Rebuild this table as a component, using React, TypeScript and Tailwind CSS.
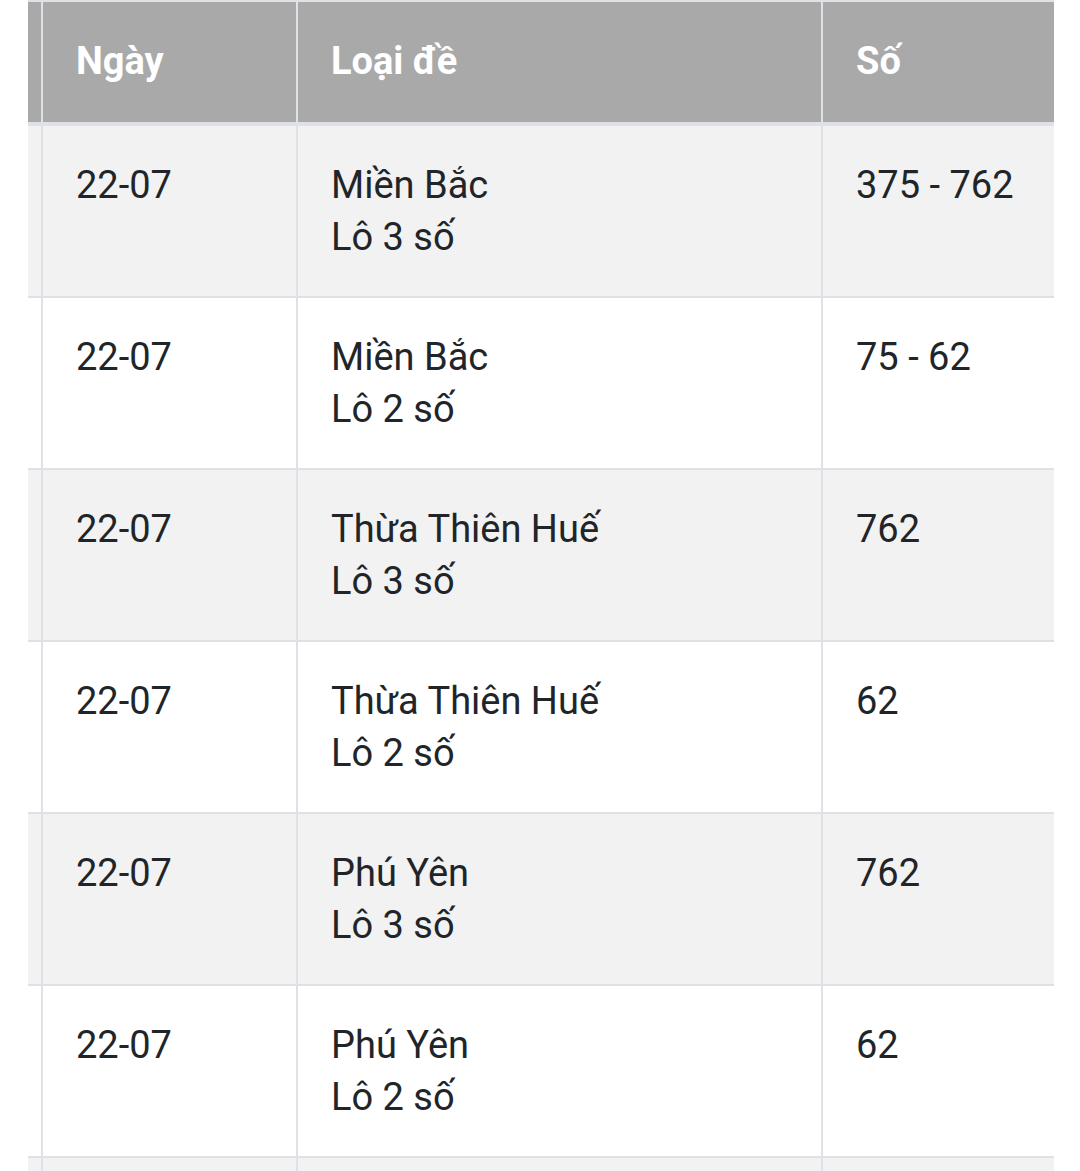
const rows = [
  { date: "22-07", region: "Miền Bắc", type: "Lô 3 số", num: "375 - 762" },
  { date: "22-07", region: "Miền Bắc", type: "Lô 2 số", num: "75 - 62" },
  { date: "22-07", region: "Thừa Thiên Huế", type: "Lô 3 số", num: "762" },
  { date: "22-07", region: "Thừa Thiên Huế", type: "Lô 2 số", num: "62" },
  { date: "22-07", region: "Phú Yên", type: "Lô 3 số", num: "762" },
  { date: "22-07", region: "Phú Yên", type: "Lô 2 số", num: "62" },
  { date: "", region: "", type: "", num: "" },
];

export default function App() {
  return (
    <div
      className="h-[1171px] overflow-hidden bg-white"
      style={{ fontFamily: "Roboto, 'Noto Sans', sans-serif" }}
    >
      <div className="ml-[28px] w-[1026px] border-t-2 border-[#dee2e6] text-[38px] leading-[52px] text-[#212529]">
        {/* Header */}
        <div className="flex h-[124px] bg-[#a9a9a9] border-b-4 border-[#dee2e6] font-bold text-white">
          <div className="w-[15px] border-r-2 border-[#dee2e6]" />
          <div className="w-[255px] border-r-2 border-[#dee2e6] px-[33px] pt-[33px]">Ngày</div>
          <div className="w-[525px] border-r-2 border-[#dee2e6] px-[33px] pt-[33px]">Loại đề</div>
          <div className="w-[231px] px-[33px] pt-[33px]">Số</div>
        </div>

        {/* Body rows */}
        {rows.map((r, i) => (
          <div
            key={i}
            className={`flex h-[172px] border-b-2 border-[#dee2e6] ${i % 2 === 0 ? "bg-[#f2f2f2]" : "bg-white"}`}
          >
            <div className="w-[15px] border-r-2 border-[#dee2e6]" />
            <div className="w-[255px] border-r-2 border-[#dee2e6] px-[33px] pt-[33px]">{r.date}</div>
            <div className="w-[525px] border-r-2 border-[#dee2e6] px-[33px] pt-[33px]">
              <div>{r.region}</div>
              <div>{r.type}</div>
            </div>
            <div className="w-[231px] px-[33px] pt-[33px] whitespace-nowrap">{r.num}</div>
          </div>
        ))}
      </div>
    </div>
  );
}
